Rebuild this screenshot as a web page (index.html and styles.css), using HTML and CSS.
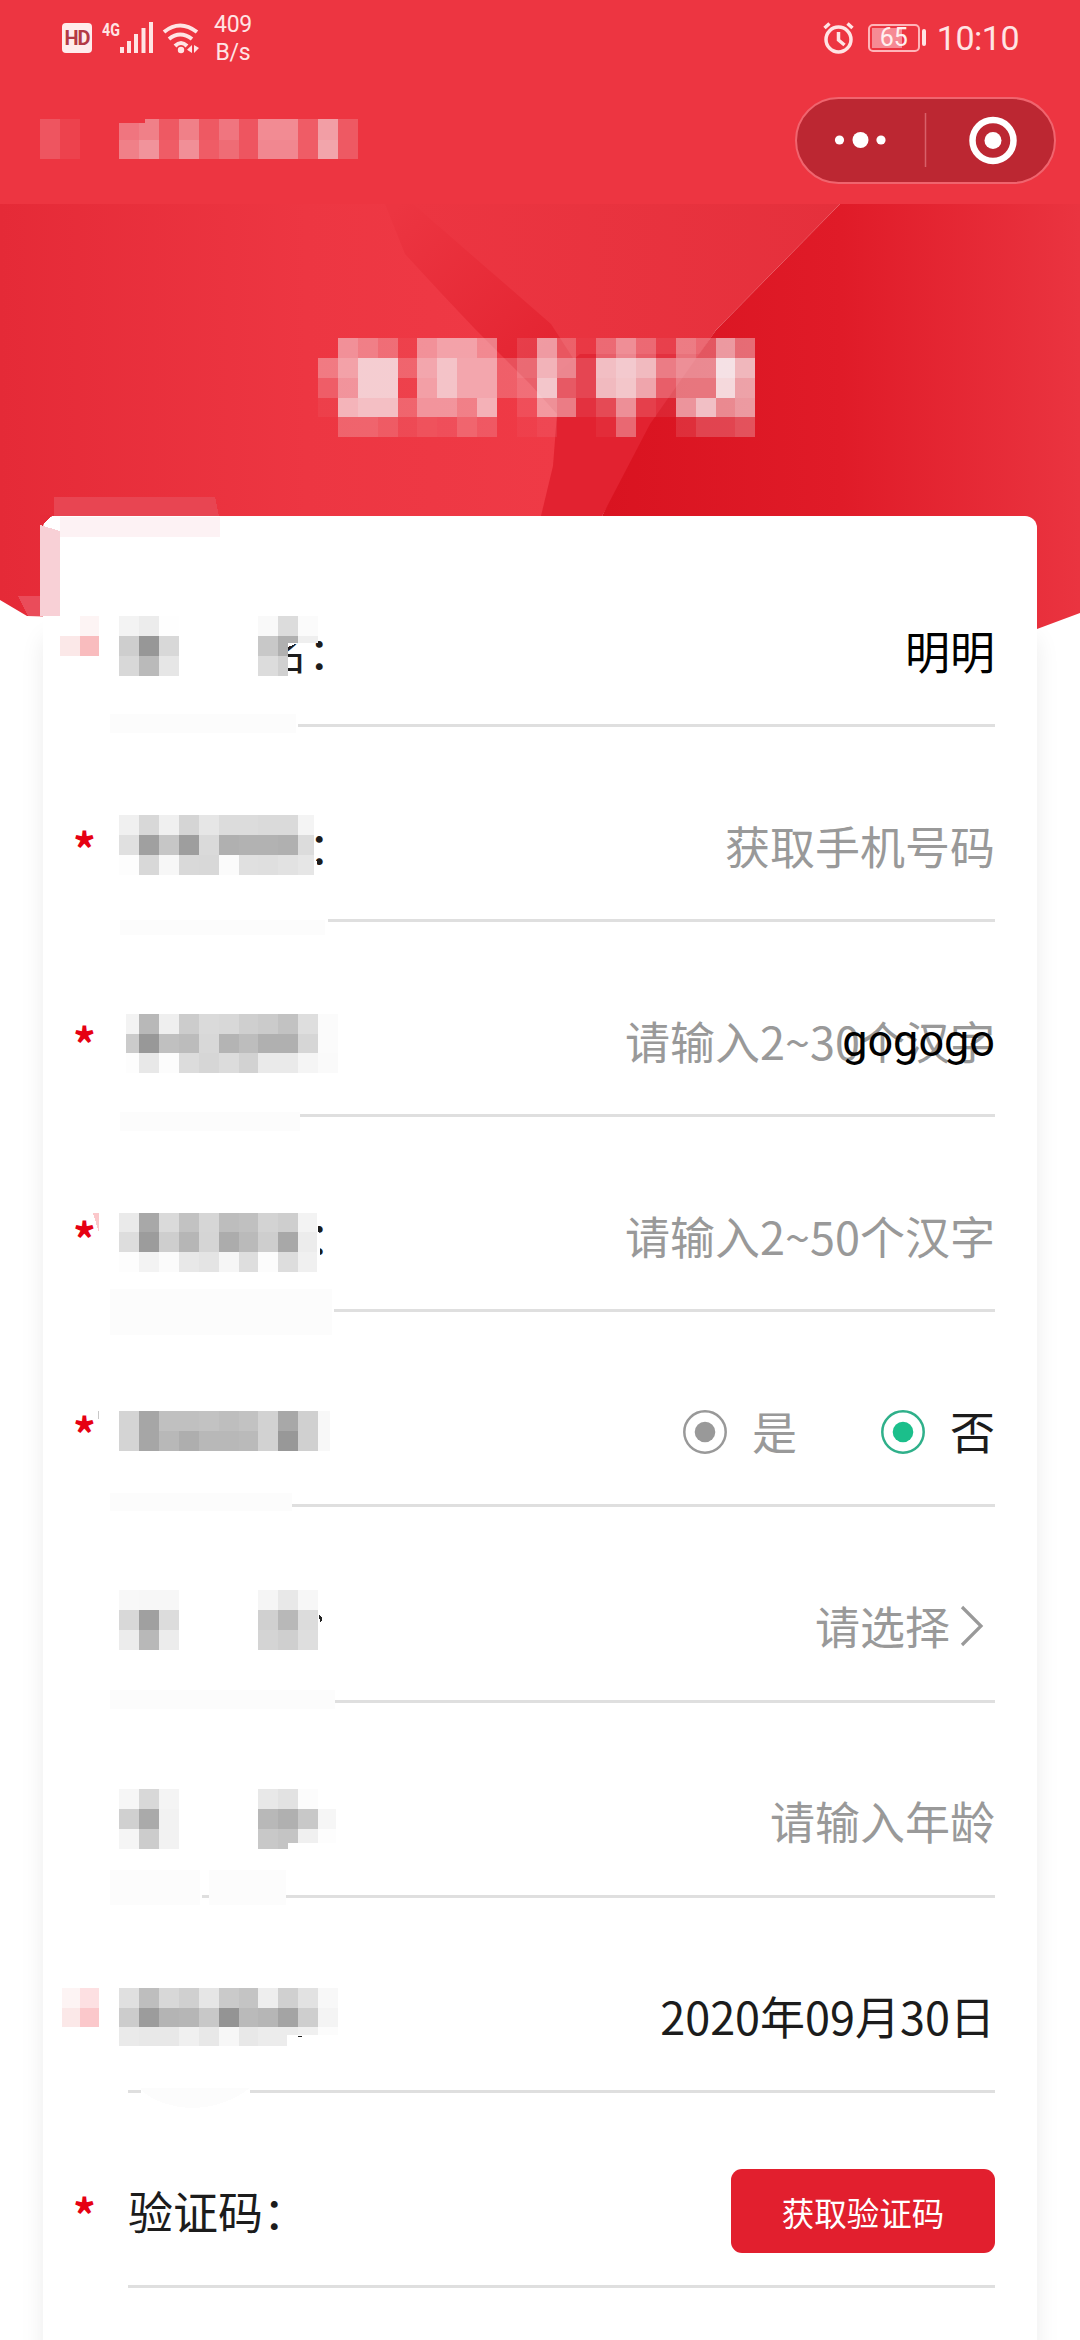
FILE: index.html
```html
<!DOCTYPE html>
<html lang="zh-CN">
<head>
<meta charset="utf-8">
<title>表单</title>
<link rel="stylesheet" href="styles.css">
</head>
<body>
<div class="page">
  <svg class="banner" viewBox="0 0 1080 426" aria-hidden="true">
    <defs>
      <linearGradient id="left" gradientUnits="userSpaceOnUse" x1="0" x2="557"><stop offset="0" stop-color="#e52a37"/><stop offset=".55" stop-color="#ed3642"/><stop offset="1" stop-color="#ef3a46"/></linearGradient>
      <linearGradient id="top" x1="0" x2="1"><stop offset="0" stop-color="#ec3541"/><stop offset="1" stop-color="#e5303c"/></linearGradient>
      <linearGradient id="band" gradientUnits="userSpaceOnUse" x1="400" y1="0" x2="540" y2="150"><stop offset="0" stop-color="#ec3541"/><stop offset="1" stop-color="#e42532"/></linearGradient>
      <linearGradient id="right" x1="0" x2="1"><stop offset="0" stop-color="#d91320"/><stop offset=".5" stop-color="#e01b28"/><stop offset="1" stop-color="#ea3440"/></linearGradient>
    </defs>
    <path fill="url(#left)" d="M0 0H600V426H540L27 412L0 396Z"/>
    <path fill="url(#band)" d="M385 0H430L580 130V210H557L530 180L475 125L441 89L405 50Z"/>
    <path fill="url(#top)" d="M413 0H840L716 126L690 165H580L551 120Z"/>
    <path fill="#e22230" d="M557 170L580 150H700L602 312H541L553 262L557 210Z"/>
    <path fill="url(#right)" d="M840 0H1080V409L1037 425H602V312L650 220L716 126Z"/>
  </svg>

  <header class="header">
    <div class="status">
      <span class="hd">HD</span>
      <span class="net">4G</span>
      <svg class="signal" viewBox="0 0 34 32"><path d="M0 26h4v6h-4zM7 20h4v12h-4zM14 13h4v19h-4zM21.500 7h4v25h-4zM29 1h4v31h-4z"/></svg>
      <svg class="wifi" viewBox="0 0 38 32"><path class="arc" d="M2 10Q18 -3 35 10M7 17Q18 8 30 17M13 24Q19 18 25 24"/><circle cx="19" cy="28" r="3.200"/><path d="M30 23v8l-5-3.200zM32 23v8l5-5z"/></svg>
      <span class="rate">409<br>B/s</span>
      <span class="spring"></span>
      <svg class="alarm" viewBox="0 0 32 32"><circle cx="15.500" cy="17.500" r="12.500"/><path d="M15.500 10v8l6 5M1.500 6l5-4.500M24.500 1.500l5 4.500"/></svg>
      <span class="battery"><i class="level"></i><b>65</b></span><span class="nub"></span>
      <span class="time">10:10</span>
    </div>
    <nav class="nav">
      <div class="capsule">
        <svg viewBox="0 0 260 86"><circle cx="44.500" cy="43" r="4.600"/><circle cx="65.500" cy="43" r="8"/><circle cx="86" cy="43" r="4.600"/><path class="split" d="M130.500 16v54"/><circle class="ring" cx="198" cy="43.500" r="20.500"/><circle cx="198" cy="43.500" r="8.500"/></svg>
      </div>
    </nav>
  </header>

  <main class="card">
    <div class="row"><span class="label short">名：</span><span class="value">明明</span></div>
    <div class="row"><em>*</em><span class="label colon">：</span><span class="hint">获取手机号码</span></div>
    <div class="row"><em>*</em><span class="hint">请输入2~30个汉字</span><span class="typed">gogogo</span></div>
    <div class="row"><em>*</em><span class="label colon">：</span><span class="hint">请输入2~50个汉字</span></div>
    <div class="row"><em>*</em>
      <span class="option"><svg viewBox="0 0 44 44"><circle class="rim" cx="22" cy="22" r="20.700"/><circle cx="22" cy="22" r="10.300"/></svg>是</span>
      <span class="option on"><svg viewBox="0 0 44 44"><circle class="rim" cx="22" cy="22" r="20.700"/><circle cx="22" cy="22" r="10.300"/></svg>否</span>
    </div>
    <div class="row"><span class="label colon">：</span><span class="hint">请选择</span><svg class="chevron" viewBox="0 0 24 42"><path d="M2 2L21 21L2 40"/></svg></div>
    <div class="row"><span class="hint">请输入年龄</span></div>
    <div class="row"><span class="value date">2020年09月30日</span></div>
    <div class="row"><em>*</em><span class="label">验证码：</span><button class="send">获取验证码</button></div>
  </main>

  <svg class="mosaic" viewBox="0 0 1080 2340" aria-hidden="true">
    <!-- smudges on the card corner -->
    <path fill="#e84552" d="M54 497H215L219 516H54Z"/>
    <path fill="#fdf2f4" d="M60 517H220V537H60Z"/>
    <path fill="#e62a38" d="M40 515H52L40 528Z"/>
    <path fill="#fff" d="M44 524Q49 516 55 516L60 531L44 526Z"/>
    <path fill="#f8d0d6" d="M40 525L60 531V616H40Z"/>
    <path fill="#ea4c5a" d="M18 596H40V616H28Z"/>
    <!-- covered parts of labels and dividers -->
    <path fill="#fff" d="M255 612H298V643L288 647V680H255ZM120 720H298V731H120ZM120 915H328V926H120ZM300 815H312L318 876H300ZM120 1110H296V1121H120ZM120 1307H334V1318H120ZM300 1213H317L320 1250V1272H300ZM120 1501H292V1512H120ZM120 1695H335V1706H120ZM300 1600H318L325 1624V1660H300ZM120 1892H202V1902H120ZM209 1892H286V1902H209ZM141 2086H250V2096H141Z"/>
    <path fill="#fcfcfc" d="M110 714H296V733H110ZM120 920H325V935H120ZM120 1112H300V1131H120ZM110 1289H332V1335H110ZM110 1493H292V1511H110ZM110 1690H335V1709H110ZM110 1870H200V1905H110ZM209 1870H286V1905H209ZM141 2088H250Q225 2107 193 2108Q160 2107 141 2090Z"/>
    <path fill="#fbe8e8" d="M60 636h20v20H60ZM62 2008h18v19H62Z"/><path fill="#f9bcbe" d="M80 636h19v20H80Z"/>
    <path fill="#fbc8cb" d="M80 2008h19v19H80ZM93 1213h6v20Z"/><path fill="#fde0e2" d="M80 1988h19v20H80Z"/><path fill="#fdf4f4" d="M80 616h19v20H80ZM62 1988h18v20H62Z"/>
    <g id="cells"></g>
    <path fill="#c8c8c8" d="M97.500 1411h1v8h-1Z"/>
    <path fill="#222" d="M296 2037l6-1.500v1.500ZM318.500 1615q4 0 3.500 5l-1.500 2Z"/>
  </svg>
</div>
<script src="mosaic.js"></script>
</body>
</html>
```
FILE: mosaic.js
```js
// Pixelated blocks. Each entry: column edges, row edges, values per row.
// Values are grey levels in hex; "w" entries are white at a percentage.
const full = [119, 139, 159, 179, 199, 219, 239, 258, 278, 298, 318, 338];
const edges = (first, last) => [first, ...full.slice(1, -1), last];
const blocks = [
  [[119, 139, 159, 179], [616, 636, 656, 676], ["f3 ec fe", "ce 97 d8", "d8 ba e6"]],
  [[258, 278, 298, 318], [616, 636, 643], ["f9 dc fb", "c8 b0 ef"]],
  [[258, 278, 288], [643, 656, 676], ["c8 b0", "dc d0"]],
  [[...full.slice(0, 10), 314], [815, 835, 855, 875], ["f0 d8 f0 d5 e6 dc dc da da f4", "e0 a0 c6 9e da b0 b2 b2 b0 dc", "fd d8 f7 d9 d8 fb e0 df e2 e6"]],
  [edges(126, 338), [1014, 1034, 1053, 1073], ["f3 b8 ef cc da d8 cf cb c2 de fb", "cb 98 c0 bc d8 b4 bd b0 b0 d6 fb", "fd e8 fc dc d6 dc d2 ea ea f5 fa"]],
  [[...full.slice(0, 10), 317], [1213, 1232, 1252, 1272], ["ea a8 da c2 d6 bd c0 d3 ce f3", "dd 9c ce b6 d5 ac ba ce a8 ec", "fd f3 fb e8 e4 f6 de fc dd f0"]],
  [edges(119, 330), [1411, 1431, 1451], ["d4 a6 c0 c0 c2 be c2 d2 a8 d0 f8", "d4 a6 b8 ae b8 b8 ba d2 98 d0 f8"]],
  [[119, 139, 159, 179], [1590, 1610, 1630, 1650], ["f8 f7 f7", "d8 a0 dc", "ec b8 ec"]],
  [[258, 278, 298, 318], [1590, 1610, 1630, 1650], ["f5 e8 f7", "d0 b8 dc", "d4 cf de"]],
  [[119, 139, 159, 179], [1789, 1809, 1829, 1849], ["f6 d8 f4", "d0 aa f2", "f5 cc f2"]],
  [[258, 278, 298, 318, 336], [1789, 1809, 1829, 1843], ["e8 e2 fc ff", "b8 b0 c8 f6", "c8 c4 f0 fd"]],
  [[258, 278, 288], [1843, 1849], ["c8 c4"]],
  [edges(119, 338), [1988, 2008, 2027, 2035], ["e0 be d8 d0 e6 ca c4 ee d0 e2 f8", "cc 9c b4 b6 c8 94 ba b6 a4 ce f4", "ea e8 e8 f0 e8 f7 e8 ec ec f0 fc"]],
  [[...full.slice(0, 9), 287], [2035, 2046], ["ea e8 e8 f0 e8 f7 e8 ec ec"]],
  [[40, 60, 80], [119, 159], ["18 7"], "w"],
  [[...full, 358], [123, 140, 159], ["36 42 20 42 20 36 18 48 48 22 58 20", "42 52 22 50 22 30 18 46 46 22 62 20"], "w"],
  [[145, ...full.slice(2), 358], [119, 123], ["42 20 42 20 36 18 48 48 22 58 20"], "w"],
  [[318, 338, 358, 378, 398, 417, 437, 457, 477, 497, 517, 537, 557, 576, 596, 616, 636, 656, 676, 696, 716, 735, 755], [338, 358, 378, 398, 417, 437], [
    "0 50 40 30 5 50 60 60 45 0 12 60 25 3 30 50 30 8 40 30 62 40",
    "38 60 84 84 25 62 78 62 62 22 35 72 50 18 78 84 76 45 55 55 96 76",
    "22 52 84 84 5 58 78 62 62 22 30 82 28 18 76 82 66 30 45 45 92 66",
    "5 70 76 76 25 52 52 40 68 0 12 54 45 8 20 55 15 8 60 80 54 62",
    "0 25 25 20 10 15 13 25 18 0 4 8 0 0 5 35 0 0 12 22 22 28"], "w"]
];
document.getElementById("cells").innerHTML = blocks.map(([xs, ys, rows, mode]) =>
  rows.map((row, j) => row.split(" ").map((v, i) => {
    const fill = mode === "w" ? `rgba(246,234,237,${v / 100})` : `#${v}${v}${v}`;
    return `<rect x="${xs[i]}" y="${ys[j]}" width="${xs[i + 1] - xs[i]}" height="${ys[j + 1] - ys[j]}" fill="${fill}"/>`;
  }).join("")).join("")).join("");
```
FILE: styles.css
```css
* { box-sizing: border-box; }
body { margin: 0; background: #fff; }
.page {
  position: relative;
  width: 1080px;
  height: 2340px;
  overflow: hidden;
  font-family: "Noto Sans CJK SC", sans-serif;
  font-size: 45px;
  line-height: 60px;
  color: #1c1c1c;
}
.banner { position: absolute; left: 0; top: 204px; width: 1080px; height: 426px; }
.mosaic { position: absolute; left: 0; top: 0; width: 1080px; height: 2340px; shape-rendering: crispEdges; pointer-events: none; }

.header { height: 204px; background: #ed3541; color: #ffe4e4; font-family: Roboto, sans-serif; }
.status { display: flex; align-items: flex-start; height: 97px; padding: 17px 61px 0 62px; }
.status svg { fill: #ffe4e4; }
.hd {
  width: 30px; height: 30px; margin-top: 6px; border-radius: 4px;
  background: #ffecec; color: #b33a45;
  font-size: 20px; font-weight: 700; line-height: 31px; text-align: center; letter-spacing: -1px;
}
.net { width: 18px; margin: 4px 0 0 10px; font-size: 19px; font-weight: 700; line-height: 18px; transform: scaleX(.75); transform-origin: left; }
.signal { width: 34px; height: 32px; margin: 4px 0 0 0; }
.wifi { width: 38px; height: 32px; margin: 5px 0 0 8px; }
.wifi .arc { fill: none; stroke: #ffe4e4; stroke-width: 4; }
.rate { margin: -6px 0 0 14px; font-size: 23px; line-height: 28px; text-align: center; letter-spacing: -.3px; }
.spring { flex: 1; }
.alarm { width: 32px; height: 32px; margin: 5px 13px 0 0; }
.status .alarm { fill: none; stroke: #ffe4e4; stroke-width: 3.5; }
.battery {
  display: flex; position: relative; justify-content: center;
  width: 52px; height: 28px; margin-top: 7px;
  border: 2px solid #ffb4b8; border-radius: 5px;
  line-height: 24px;
}
.battery .level { position: absolute; left: 2px; top: 2px; width: 30px; height: 20px; background: #f68a94; }
.battery b { position: relative; font-size: 25px; font-weight: 400; color: #fff0f0; }
.nub { width: 4px; height: 17px; margin: 12px 11px 0 2px; border-radius: 2px; background: #ffe4e4; }
.time { margin-top: 1px; font-size: 34px; line-height: 40px; letter-spacing: -.5px; }
.nav { display: flex; justify-content: flex-end; padding-right: 24px; }
.capsule { width: 261px; height: 87px; border: 2px solid #f0646e; border-radius: 44px; background: #bc2732; }
.capsule svg { display: block; width: 260px; height: 86px; margin: -2px; fill: #fff; }
.capsule .split { stroke: #d8606a; stroke-width: 1.500px; }
.capsule .ring { fill: none; stroke: #fff; stroke-width: 6.500px; }

.card {
  position: relative;
  width: 994px; height: 1840px;
  margin: 312px 0 0 43px;
  padding: 16px 42px 0 85px;
  border-radius: 12px 12px 0 0;
  background: #fff;
  box-shadow: 0 120px 24px rgba(0, 0, 0, .08);
}
.row {
  position: relative;
  display: flex; align-items: center; justify-content: flex-end;
  height: 195.1px;
  padding-top: 45px;
  border-bottom: 3px solid #dfdfdf;
}
.row em { position: absolute; left: -55px; top: 91px; width: 22px; color: #e60012; font-style: normal; font-weight: 700; text-align: center; }
.label { margin-right: auto; }
.label.short { padding-left: 135px; }
.label.colon { padding-left: 180px; }
.value { color: #000; }
.date { color: #1c1c1c; }
.hint { color: #999; }
.typed { position: absolute; right: 0; font-family: Roboto, sans-serif; color: #000; }
.option { display: flex; align-items: center; gap: 25px; color: #999; }
.option svg { width: 44px; height: 44px; margin-top: 3px; fill: #999; }
.option .rim { fill: none; stroke: #999; stroke-width: 2.500px; }
.option.on { margin-left: 84px; color: #1c1c1c; }
.option.on svg { fill: #1bbf8b; }
.option.on .rim { stroke: #2fb08a; }
.chevron { width: 24px; height: 42px; margin: 0 11px 0 10px; fill: none; stroke: #999; stroke-width: 3.200px; }
.send {
  width: 264px; height: 84px; padding: 0;
  border: 0; border-radius: 11px;
  background: #e21f2e; color: #fff;
  font: 32.500px "Noto Sans CJK SC", sans-serif;
}
```
